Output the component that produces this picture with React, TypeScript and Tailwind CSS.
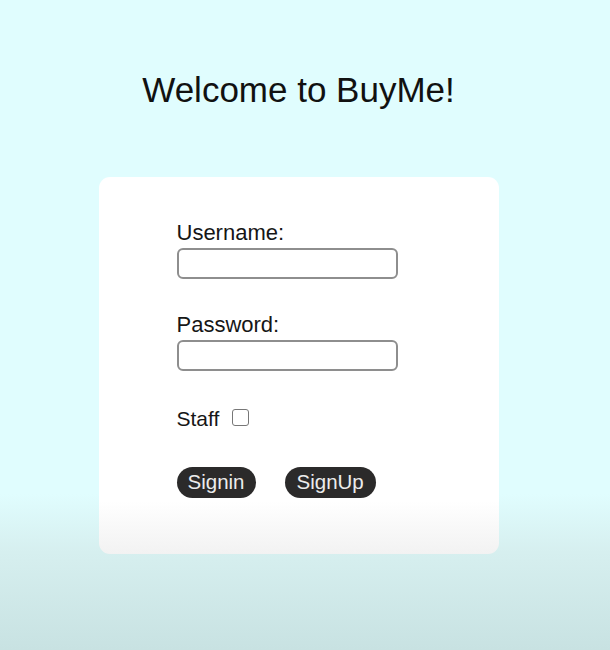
import React from "react";

const Field = ({ label, type }: { label: string; type: string }) => (
  <div className="flex flex-col">
    <label className="text-[22px] leading-[26px] text-[#161616]">{label}</label>
    <input
      type={type}
      className="mt-[2px] w-[221px] h-[31px] rounded-[6px] border-2 border-[#8e8e8e] bg-white px-2 outline-none"
    />
  </div>
);

export default function App() {
  return (
    <div
      className="min-h-[650px] w-full flex flex-col items-center pr-[13px] bg-[linear-gradient(180deg,#e0fdfe_0%,#e0fdfe_76%,#d6efef_85%,#c8e2e2_100%)]"
      style={{ fontFamily: '"Liberation Sans", Arial, sans-serif' }}
    >
      {/* Titre */}
      <h1 className="pt-[70px] text-[35px] leading-[40px] text-[#111]">Welcome to BuyMe!</h1>

      {/* Carte */}
      <div className="mt-[67px] w-[400px] rounded-[11px] bg-[linear-gradient(180deg,#ffffff_0%,#ffffff_86%,#f2f2f2_100%)] pt-[43px] pb-[56px] pl-[78px]">
        <form className="flex flex-col" onSubmit={(e) => e.preventDefault()}>
          <Field label="Username:" type="text" />
          <div className="mt-[33px]">
            <Field label="Password:" type="password" />
          </div>

          <div className="mt-[35px] flex items-center gap-[13px]">
            <span className="text-[21px] leading-[26px] text-[#161616]">Staff</span>
            <input
              type="checkbox"
              className="appearance-none w-[17px] h-[17px] rounded-[3px] border border-[#777] bg-white -mt-[4px]"
            />
          </div>

          <div className="mt-[35px] flex items-center gap-[29px]">
            <button className="h-[31px] rounded-full bg-[#2b2a2a] px-[11px] text-[20.5px] text-[#ececec]">
              Signin
            </button>
            <button className="h-[31px] rounded-full bg-[#2b2a2a] px-[12px] text-[20.5px] text-[#ececec]">
              SignUp
            </button>
          </div>
        </form>
      </div>
    </div>
  );
}
